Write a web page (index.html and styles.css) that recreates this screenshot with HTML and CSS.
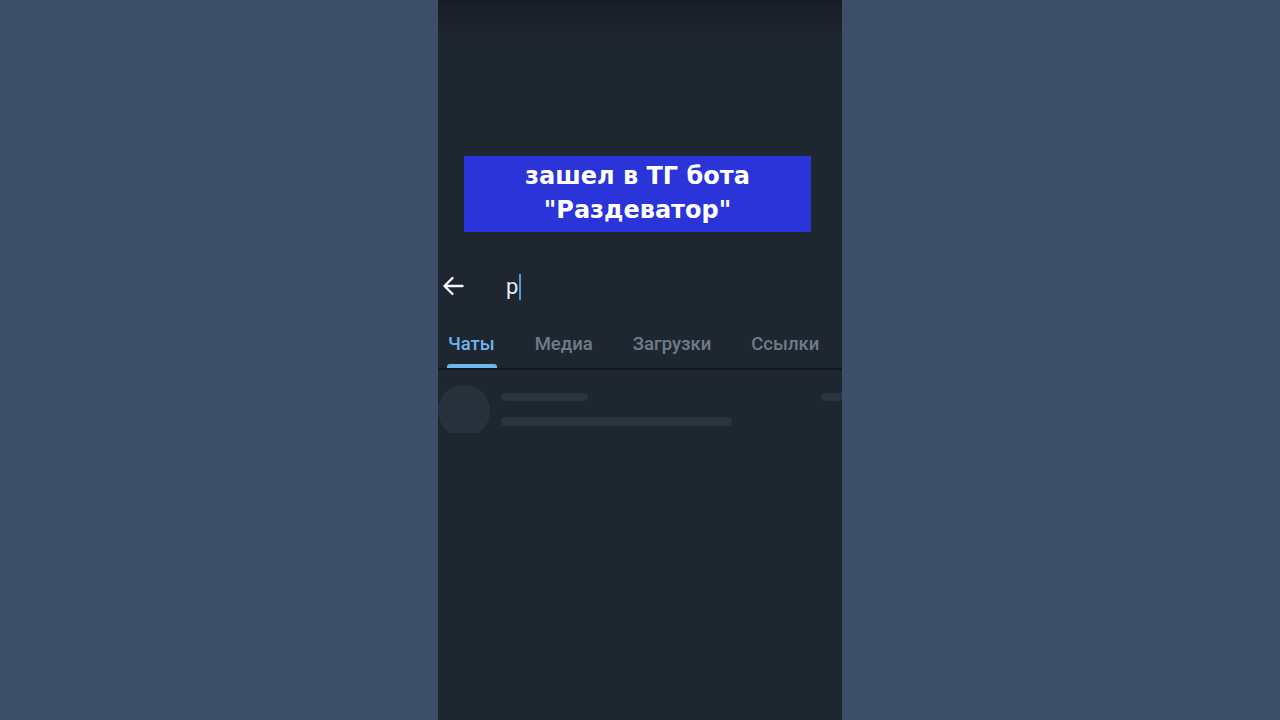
FILE: index.html
```html
<!DOCTYPE html>
<html lang="ru">
<head>
<meta charset="utf-8">
<title>Поиск</title>
<link rel="stylesheet" href="styles.css">
</head>
<body>
<div class="phone">
  <div class="banner">
    <div class="banner-line">зашел в ТГ бота</div>
    <div class="banner-line">"Раздеватор"</div>
  </div>
  <div class="search">
    <svg class="back" width="22" height="20" viewBox="0 0 22 20">
      <path d="M20.5 10H2.5M10.5 2L2.5 10L10.5 18" fill="none" stroke="#f2f4f6" stroke-width="2.4" stroke-linecap="round" stroke-linejoin="round"/>
    </svg>
    <div class="query"><span class="query-text">р</span><span class="caret"></span></div>
  </div>
  <div class="tabs">
    <div class="tab active"><span class="tab-label">Чаты</span><span class="tab-bar"></span></div>
    <div class="tab"><span class="tab-label">Медиа</span><span class="tab-bar"></span></div>
    <div class="tab"><span class="tab-label">Загрузки</span><span class="tab-bar"></span></div>
    <div class="tab"><span class="tab-label">Ссылки</span><span class="tab-bar"></span></div>
  </div>
  <div class="divider"></div>
  <div class="skeleton">
    <div class="sk-avatar"></div>
    <div class="sk-lines">
      <div class="sk-line sk-short"></div>
      <div class="sk-line sk-long"></div>
    </div>
    <div class="sk-date"></div>
  </div>
</div>
</body>
</html>
```

FILE: styles.css
```css
html, body {
  margin: 0;
  padding: 0;
  height: 100%;
}
body {
  background: #3d4f66;
  display: flex;
  justify-content: center;
  font-family: Roboto, "Noto Sans", sans-serif;
}
.phone {
  width: 404px;
  height: 720px;
  overflow: hidden;
  background: linear-gradient(180deg, #161b24 0px, #1a2029 12px, #1e2630 40px, #1e2630 100%);
  display: flex;
  flex-direction: column;
}
.banner {
  margin: 156px 0 0 26px;
  width: 347px;
  height: 76px;
  background: #2a34d9;
  display: flex;
  flex-direction: column;
  justify-content: center;
  align-items: center;
  box-sizing: border-box;
  padding-bottom: 2px;
}
.banner-line {
  font-family: "DejaVu Sans", sans-serif;
  font-weight: bold;
  font-size: 24px;
  line-height: 34px;
  color: #ffffff;
  white-space: nowrap;
}
.search {
  margin-top: 32px;
  height: 44px;
  display: flex;
  align-items: center;
  padding-left: 4px;
}
.back {
  display: block;
}
.query {
  margin-left: 42px;
  display: flex;
  align-items: center;
  height: 28px;
  margin-top: 2px;
}
.query-text {
  font-family: Roboto, sans-serif;
  font-size: 22px;
  color: #e9ecef;
  line-height: 28px;
  position: relative;
  top: 0px;
}
.caret {
  width: 2px;
  height: 26px;
  background: #4d9de0;
  margin-left: 1px;
  margin-top: -1px;
}
.tabs {
  margin-top: 12px;
  height: 48px;
  display: flex;
  gap: 40px;
  padding-left: 10px;
}
.tab {
  display: flex;
  flex-direction: column;
  align-items: stretch;
}
.tab-label {
  font-family: Roboto, sans-serif;
  font-weight: 500;
  font-size: 18.5px;
  line-height: 24px;
  margin-top: 12px;
  color: #6e7c8a;
  white-space: nowrap;
}
.tab-bar {
  margin: 8px -2px 0 -1px;
  height: 4px;
  border-radius: 3px 3px 0 0;
  background: transparent;
}
.tab.active .tab-label {
  color: #6db4ee;
}
.tab.active .tab-bar {
  background: #6cb8f2;
}
.divider {
  height: 2px;
  background: #131920;
}
.skeleton {
  margin-top: 15px;
  height: 48px;
  overflow: hidden;
  display: flex;
  align-items: flex-start;
}
.sk-avatar {
  width: 52px;
  height: 52px;
  border-radius: 50%;
  background: #28313c;
  flex: none;
}
.sk-lines {
  margin-left: 11px;
  padding-top: 8px;
  display: flex;
  flex-direction: column;
  gap: 16px;
}
.sk-line {
  height: 8px;
  border-radius: 4px;
  background: #2a333e;
}
.sk-short {
  width: 87px;
}
.sk-long {
  width: 231px;
  height: 9px;
}
.sk-date {
  margin-left: auto;
  margin-top: 8px;
  width: 24px;
  height: 8px;
  border-radius: 4px 0 0 4px;
  background: #2a333e;
  margin-right: -3px;
}
```
